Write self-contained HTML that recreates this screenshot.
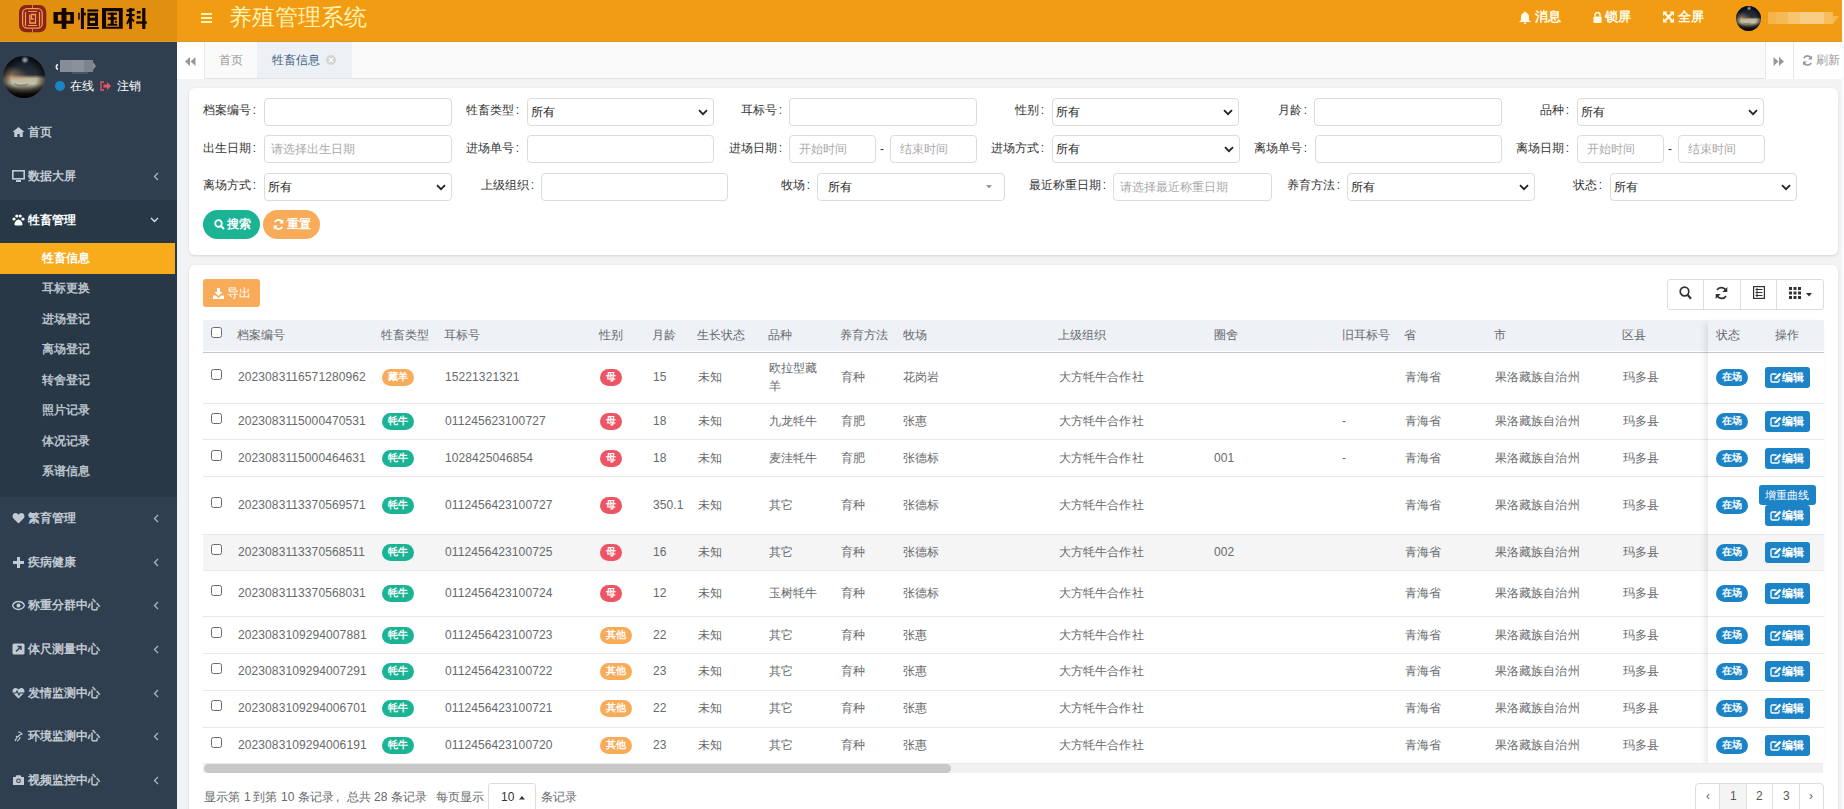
<!DOCTYPE html><html><head><meta charset="utf-8"><title>养殖管理系统</title><style>
*{box-sizing:border-box;margin:0;padding:0}
html,body{width:1844px;height:809px;overflow:hidden}
body{position:relative;background:#f3f3f4;font-family:"Liberation Sans",sans-serif;font-size:12px;color:#676a6c}
.abs{position:absolute}
.t{position:absolute;white-space:nowrap;line-height:1}
#hdrL{left:0;top:0;width:177px;height:42px;background:#e18f0e}
#hdrR{left:177px;top:0;width:1665px;height:42px;background:#f29c14}
#edge{left:1842px;top:0;width:2px;height:809px;background:#fafbfe}
#side{left:0;top:42px;width:177px;height:767px;background:#2f3f4f}
.mi{position:absolute;left:0;width:177px;height:44px;color:#c2cad3;font-weight:bold}
.mi .ic{position:absolute;left:12px;top:16px;width:13px;height:12px}
.mi .lb{position:absolute;left:28px;top:15px;line-height:14px;font-size:12px;white-space:nowrap}
.mi .ch{position:absolute;left:152px;top:17px;width:7px;height:10px}
.sub{position:absolute;left:42px;font-weight:bold;color:#bcc5cf;white-space:nowrap;line-height:14px}
#tabs{left:177px;top:42px;width:1665px;height:37px;background:#fafafa;border-bottom:1px solid #e4e4e4}
.panel{position:absolute;background:#fff;border-radius:6px;box-shadow:0 1px 3px rgba(0,0,0,.12)}
.lbl{position:absolute;color:#333;white-space:nowrap;line-height:12px;text-align:right}
.inp{position:absolute;height:28px;border:1px solid #dcdcdc;border-radius:4px;background:#fff}
.ph{position:absolute;left:7px;top:7px;color:#aaa;line-height:13px;white-space:nowrap}
.sel .v{position:absolute;left:3px;top:8px;color:#222;line-height:13px}
.sel svg{position:absolute;right:9px;top:10px}
.th{position:absolute;top:329px;line-height:12px;color:#676a6c;white-space:nowrap}
.td{position:absolute;line-height:12px;color:#676a6c;white-space:nowrap;letter-spacing:.1px}
.rl{position:absolute;left:203px;width:1620px;height:1px;background:#e7eaec}
.bdg{position:absolute;height:17px;border-radius:9px;color:#fff;font-weight:900;font-size:10px;line-height:16px;text-align:center;white-space:nowrap}
.cb{position:absolute;left:211px;width:11px;height:11px;border:1px solid #6a6a6a;border-radius:2.5px;background:#fff}
.g{background:#1ab394}.o{background:#f8ac59}.r{background:#ed5565}.b{background:#1c84c6}
.edit{position:absolute;left:1765px;width:45px;height:21px;background:#1c84c6;border-radius:3px;color:#fff;font-weight:bold;line-height:21px;font-size:12px}
</style></head><body>
<div id="hdrL" class="abs"></div><div id="hdrR" class="abs"></div>
<svg class="abs" style="left:0;top:0" width="177" height="42" viewBox="0 0 177 42">
<rect x="19" y="5" width="27.3" height="27.2" rx="7" fill="#8b2417"/>
<rect x="32" y="5" width="0.8" height="3.2" fill="#e8a050"/><rect x="32" y="29" width="0.8" height="3.2" fill="#e8a050"/>
<rect x="22.6" y="8.6" width="19.6" height="19.6" rx="4.5" fill="none" stroke="#f09a55" stroke-width="1.3"/>
<path d="M25.5 12v14.5M39.5 12v14.5M28 11.5h9M28 25.5h9" fill="none" stroke="#f09a55" stroke-width="1.2"/>
<path d="M29.8 14.5v8.5h5.7v-8.5h-4v4.5h2.2" fill="none" stroke="#f0a055" stroke-width="1.3"/>
<g fill="#120400">
<!-- 中 -->
<rect x="61.7" y="8" width="4.6" height="21"/>
<path d="M53.5 11.9h20.4v11.9H53.5zM57.9 14.8v6h3.8v-6zM66.3 14.8v6h4v-6z" fill-rule="evenodd"/>
<!-- 恒 -->
<rect x="80.9" y="8" width="3" height="21"/>
<rect x="78.2" y="12.7" width="1.5" height="7"/>
<rect x="83.9" y="12.7" width="1.9" height="2.7"/>
<rect x="87.4" y="9.4" width="10.9" height="2.2"/>
<path d="M87.4 12.7H98V26H87.4zM89.9 15.7v2.1H95v-2.1zM89.9 20.8V23H95v-2.2z" fill-rule="evenodd"/>
<rect x="87.1" y="27" width="11.7" height="2"/>
<!-- 国 -->
<path d="M102 8h20.7v20.7H102zM106.1 11.3v15.5h12.8V11.3z" fill-rule="evenodd"/>
<rect x="107.5" y="12.7" width="9.5" height="2.1"/>
<rect x="107.8" y="17.3" width="9" height="2.4"/>
<rect x="107.5" y="23.8" width="9.8" height="1.9"/>
<rect x="110.7" y="12.7" width="3" height="12"/>
<rect x="114.8" y="20.8" width="2" height="2"/>
<!-- 科 -->
<path d="M126.5 9.6l7.8-1.4.4 2.6-7.8 1.3z"/>
<rect x="126.2" y="14" width="8.4" height="2.2"/>
<rect x="129.2" y="8" width="2.7" height="21"/>
<path d="M129.3 16.5l-3.1 7 1.6 1 2.8-5.2z"/>
<path d="M131.8 17.5l2.8 3.3-1.1 1.5-2.1-2.3z"/>
<rect x="136.8" y="11" width="3.8" height="2.5"/>
<rect x="136.8" y="15.9" width="3.8" height="2.7"/>
<rect x="142.2" y="8" width="3.2" height="21"/>
<rect x="136.2" y="21.4" width="10.6" height="2.3"/>
</g>
</svg>
<svg class="abs" style="left:201px;top:13px" width="11" height="10" viewBox="0 0 11 10"><rect y="0" width="11" height="2" fill="#fff3b5"/><rect y="4" width="11" height="2" fill="#fff3b5"/><rect y="8" width="11" height="2" fill="#fff3b5"/></svg>
<div class="t" style="left:229px;top:6px;font-size:22.7px;color:#fff3b5">养殖管理系统</div>
<svg class="abs" style="left:1519px;top:11px" width="12" height="13" viewBox="0 0 12 13"><path d="M6 0.5c.6 0 1 .4 1 .9C9 2 10 3.6 10 6v3l1.6 1.5V11H.4v-.5L2 9V6c0-2.4 1-4 3-4.6 0-.5.4-.9 1-.9zM4.5 11.5h3c0 .8-.7 1.5-1.5 1.5s-1.5-.7-1.5-1.5z" fill="#fffbe8"/></svg>
<div class="t" style="left:1535px;top:10px;font-size:13px;font-weight:bold;color:#fffbe8">消息</div>
<svg class="abs" style="left:1593px;top:11px" width="9" height="12" viewBox="0 0 9 12"><path d="M2 5.5V4a2.5 2.5 0 0 1 5 0v1.5" fill="none" stroke="#fffbe8" stroke-width="1.5"/><rect x="0.5" y="5.5" width="8" height="6.5" rx="1" fill="#fffbe8"/></svg>
<div class="t" style="left:1605px;top:10px;font-size:13px;font-weight:bold;color:#fffbe8">锁屏</div>
<svg class="abs" style="left:1663px;top:11px" width="11" height="12" viewBox="0 0 11 12"><path d="M2.2 2.5l6.6 7M8.8 2.5l-6.6 7" stroke="#fffbe8" stroke-width="2.2"/><path d="M0 .5h4.5L0 5zM11 .5H6.5L11 5zM0 11.5h4.5L0 7zM11 11.5H6.5L11 7z" fill="#fffbe8"/></svg>
<div class="t" style="left:1678px;top:10px;font-size:13px;font-weight:bold;color:#fffbe8">全屏</div>
<svg class="abs" style="left:1736px;top:6px" width="25" height="25" viewBox="0 0 42 42">
<defs>
<clipPath id="cp1736"><circle cx="21" cy="21" r="21"/></clipPath>
<linearGradient id="sky1736" x1="0" y1="0" x2="0" y2="1"><stop offset="0" stop-color="#101a28"/><stop offset=".45" stop-color="#2a3038"/><stop offset=".5" stop-color="#8a8068"/><stop offset=".54" stop-color="#bdb9a0"/><stop offset=".66" stop-color="#c5c1a8"/><stop offset=".8" stop-color="#4a473c"/><stop offset=".92" stop-color="#0c0c0c"/></linearGradient>
<radialGradient id="warm1736" cx=".12" cy=".9" r=".5"><stop offset="0" stop-color="#c8a07a" stop-opacity=".75"/><stop offset="1" stop-color="#c8a07a" stop-opacity="0"/></radialGradient>
<radialGradient id="glow1736" cx=".5" cy=".5" r=".5"><stop offset="0" stop-color="#ffffff"/><stop offset=".35" stop-color="#cfe0f0" stop-opacity=".9"/><stop offset="1" stop-color="#5a7a9a" stop-opacity="0"/></radialGradient>
<radialGradient id="vig1736" cx=".5" cy=".5" r=".5"><stop offset=".6" stop-color="#000" stop-opacity="0"/><stop offset="1" stop-color="#000" stop-opacity=".65"/></radialGradient>
</defs>
<g clip-path="url(#cp1736)">
<rect width="42" height="42" fill="url(#sky1736)"/>
<rect width="42" height="24" fill="url(#warm1736)"/>
<path d="M11 27.5c4 2.5 9 2.5 14 .5" fill="none" stroke="#5a584a" stroke-width="1.2" opacity=".5"/>
<circle cx="22" cy="3.5" r="4.5" fill="url(#glow1736)"/>
<rect width="42" height="42" fill="url(#vig1736)"/>
</g></svg>
<div class="abs" style="left:1768px;top:12px;width:8px;height:12px;background:#f4b44a"></div>
<div class="abs" style="left:1776px;top:12px;width:12px;height:12px;background:#f5ba58"></div>
<div class="abs" style="left:1788px;top:12px;width:12px;height:12px;background:#f8c46e"></div>
<div class="abs" style="left:1800px;top:12px;width:24px;height:12px;background:#f9ce84"></div>
<div class="abs" style="left:1824px;top:12px;width:9px;height:12px;background:#f6bd5a"></div>
<svg class="abs" style="left:1833px;top:16px" width="6" height="8" viewBox="0 0 6 8"><path d="M0 0h6L0 8z" fill="#f5b850"/></svg>
<div class="abs" style="left:0;top:41px;width:1842px;height:1px;background:#d8982f"></div>
<div id="edge" class="abs"></div>
<div id="side" class="abs"></div>
<svg class="abs" style="left:3px;top:56px" width="42" height="42" viewBox="0 0 42 42">
<defs>
<clipPath id="cp3"><circle cx="21" cy="21" r="21"/></clipPath>
<linearGradient id="sky3" x1="0" y1="0" x2="0" y2="1"><stop offset="0" stop-color="#101a28"/><stop offset=".45" stop-color="#2a3038"/><stop offset=".5" stop-color="#8a8068"/><stop offset=".54" stop-color="#bdb9a0"/><stop offset=".66" stop-color="#c5c1a8"/><stop offset=".8" stop-color="#4a473c"/><stop offset=".92" stop-color="#0c0c0c"/></linearGradient>
<radialGradient id="warm3" cx=".12" cy=".9" r=".5"><stop offset="0" stop-color="#c8a07a" stop-opacity=".75"/><stop offset="1" stop-color="#c8a07a" stop-opacity="0"/></radialGradient>
<radialGradient id="glow3" cx=".5" cy=".5" r=".5"><stop offset="0" stop-color="#ffffff"/><stop offset=".35" stop-color="#cfe0f0" stop-opacity=".9"/><stop offset="1" stop-color="#5a7a9a" stop-opacity="0"/></radialGradient>
<radialGradient id="vig3" cx=".5" cy=".5" r=".5"><stop offset=".6" stop-color="#000" stop-opacity="0"/><stop offset="1" stop-color="#000" stop-opacity=".65"/></radialGradient>
</defs>
<g clip-path="url(#cp3)">
<rect width="42" height="42" fill="url(#sky3)"/>
<rect width="42" height="24" fill="url(#warm3)"/>
<path d="M11 27.5c4 2.5 9 2.5 14 .5" fill="none" stroke="#5a584a" stroke-width="1.2" opacity=".5"/>
<circle cx="22" cy="3.5" r="4.5" fill="url(#glow3)"/>
<rect width="42" height="42" fill="url(#vig3)"/>
</g></svg>
<div class="abs" style="left:60px;top:60px;width:12px;height:12px;background:#868d97"></div>
<div class="abs" style="left:72px;top:60px;width:12px;height:12px;background:#8a919b"></div>
<div class="abs" style="left:84px;top:60px;width:9px;height:12px;background:#7d848e"></div>
<div class="abs" style="left:72px;top:72px;width:16px;height:2px;background:#4a5562"></div>
<svg class="abs" style="left:54px;top:64px" width="5" height="6" viewBox="0 0 5 6"><path d="M4 .5C2 1 1.5 4.5 4 5.5" fill="none" stroke="#eee" stroke-width="1.6"/></svg>
<svg class="abs" style="left:93px;top:62px" width="4" height="8" viewBox="0 0 4 8"><path d="M0 0l3 4-3 4z" fill="#8a8f88"/></svg>
<div class="abs" style="left:55px;top:81px;width:10px;height:10px;border-radius:5px;background:#1c84c6"></div>
<div class="t" style="left:70px;top:80px;font-size:12px;color:#fff">在线</div>
<svg class="abs" style="left:100px;top:81px" width="11" height="10" viewBox="0 0 11 10"><path d="M4 1H1v8h3" fill="none" stroke="#ed5565" stroke-width="1.3"/><path d="M3.5 3.5h3.5V1l4 4-4 4V6.5H3.5z" fill="#ed5565"/></svg>
<div class="t" style="left:117px;top:80px;font-size:12px;color:#fff">注销</div>
<svg class="abs" style="left:12px;top:126px" width="13" height="12" viewBox="0 0 13 12"><path d="M6.5 1L0.5 6h1.8v5h3V8h2.4v3h3V6h1.8z" fill="#c2cad3"/></svg><div class="t" style="left:28px;top:126px;font-size:12px;font-weight:bold;color:#c2cad3">首页</div>
<svg class="abs" style="left:12px;top:170px" width="13" height="12" viewBox="0 0 13 12"><rect x="0.8" y="0.8" width="11.4" height="8" fill="none" stroke="#c2cad3" stroke-width="1.6"/><rect x="4" y="10" width="5" height="2" fill="#c2cad3"/></svg><div class="t" style="left:28px;top:170px;font-size:12px;font-weight:bold;color:#c2cad3">数据大屏</div><svg class="abs" style="left:153px;top:172px" width="6" height="9" viewBox="0 0 6 9"><path d="M5 1L1.5 4.5 5 8" fill="none" stroke="#aab4be" stroke-width="1.3"/></svg>
<div class="abs" style="left:0;top:200px;width:177px;height:43px;background:#293846"></div>
<div class="abs" style="left:0;top:243px;width:177px;height:254px;background:#293846"></div>
<svg class="abs" style="left:12px;top:214px" width="13" height="12" viewBox="0 0 13 12"><circle cx="2" cy="5" r="1.6" fill="#fff"/><circle cx="4.8" cy="2" r="1.6" fill="#fff"/><circle cx="8.2" cy="2" r="1.6" fill="#fff"/><circle cx="11" cy="5" r="1.6" fill="#fff"/><path d="M6.5 5.5c2 0 4 3 4 4.8 0 1.4-1.5 1.2-4 1.2s-4 .2-4-1.2c0-1.8 2-4.8 4-4.8z" fill="#fff"/></svg><div class="t" style="left:28px;top:214px;font-size:12px;font-weight:bold;color:#fff">牲畜管理</div>
<svg class="abs" style="left:150px;top:217px" width="9" height="6" viewBox="0 0 9 6"><path d="M1 1l3.5 3.5L8 1" fill="none" stroke="#dfe4ea" stroke-width="1.3"/></svg>
<div class="abs" style="left:0;top:243px;width:175px;height:31px;background:#f8ac1c"></div>
<div class="t" style="left:42px;top:252px;font-size:12px;font-weight:bold;color:#fff">牲畜信息</div>
<div class="t" style="left:42px;top:282px;font-size:12px;font-weight:bold;color:#b9c3cd">耳标更换</div>
<div class="t" style="left:42px;top:313px;font-size:12px;font-weight:bold;color:#b9c3cd">进场登记</div>
<div class="t" style="left:42px;top:343px;font-size:12px;font-weight:bold;color:#b9c3cd">离场登记</div>
<div class="t" style="left:42px;top:374px;font-size:12px;font-weight:bold;color:#b9c3cd">转舍登记</div>
<div class="t" style="left:42px;top:404px;font-size:12px;font-weight:bold;color:#b9c3cd">照片记录</div>
<div class="t" style="left:42px;top:435px;font-size:12px;font-weight:bold;color:#b9c3cd">体况记录</div>
<div class="t" style="left:42px;top:465px;font-size:12px;font-weight:bold;color:#b9c3cd">系谱信息</div>
<svg class="abs" style="left:12px;top:512px" width="13" height="12" viewBox="0 0 13 12"><path d="M6.5 11.5L1.5 6.5C-.5 4.5.8 1 3.5 1c1.4 0 2.3.8 3 1.7C7.2 1.8 8.1 1 9.5 1c2.7 0 4 3.5 2 5.5z" fill="#c2cad3"/></svg><div class="t" style="left:28px;top:512px;font-size:12px;font-weight:bold;color:#c2cad3">繁育管理</div><svg class="abs" style="left:153px;top:514px" width="6" height="9" viewBox="0 0 6 9"><path d="M5 1L1.5 4.5 5 8" fill="none" stroke="#aab4be" stroke-width="1.3"/></svg>
<svg class="abs" style="left:12px;top:556px" width="13" height="12" viewBox="0 0 13 12"><path d="M5 1h3v4h4v3H8v4H5V8H1V5h4z" fill="#c2cad3"/></svg><div class="t" style="left:28px;top:556px;font-size:12px;font-weight:bold;color:#c2cad3">疾病健康</div><svg class="abs" style="left:153px;top:558px" width="6" height="9" viewBox="0 0 6 9"><path d="M5 1L1.5 4.5 5 8" fill="none" stroke="#aab4be" stroke-width="1.3"/></svg>
<svg class="abs" style="left:12px;top:599px" width="13" height="12" viewBox="0 0 13 12"><path d="M6.5 2.5C3.5 2.5 1.3 4.5.5 6.5c.8 2 3 4 6 4s5.2-2 6-4c-.8-2-3-4-6-4z" fill="none" stroke="#c2cad3" stroke-width="1.4"/><circle cx="6.5" cy="6.5" r="2" fill="#c2cad3"/></svg><div class="t" style="left:28px;top:599px;font-size:12px;font-weight:bold;color:#c2cad3">称重分群中心</div><svg class="abs" style="left:153px;top:601px" width="6" height="9" viewBox="0 0 6 9"><path d="M5 1L1.5 4.5 5 8" fill="none" stroke="#aab4be" stroke-width="1.3"/></svg>
<svg class="abs" style="left:12px;top:643px" width="13" height="12" viewBox="0 0 13 12"><rect x=".5" y=".5" width="12" height="11" rx="1.5" fill="#c2cad3"/><path d="M4 8.5l5-5M5.5 3.5H9V7" fill="none" stroke="#2f3f4f" stroke-width="1.4"/></svg><div class="t" style="left:28px;top:643px;font-size:12px;font-weight:bold;color:#c2cad3">体尺测量中心</div><svg class="abs" style="left:153px;top:645px" width="6" height="9" viewBox="0 0 6 9"><path d="M5 1L1.5 4.5 5 8" fill="none" stroke="#aab4be" stroke-width="1.3"/></svg>
<svg class="abs" style="left:12px;top:687px" width="13" height="12" viewBox="0 0 13 12"><path d="M6.5 11.5L1.5 6.5C-.5 4.5.8 1 3.5 1c1.4 0 2.3.8 3 1.7C7.2 1.8 8.1 1 9.5 1c2.7 0 4 3.5 2 5.5z" fill="#c2cad3"/><path d="M1 6h3l1-2 2 4 1-2h4" fill="none" stroke="#2f3f4f" stroke-width="1.1"/></svg><div class="t" style="left:28px;top:687px;font-size:12px;font-weight:bold;color:#c2cad3">发情监测中心</div><svg class="abs" style="left:153px;top:689px" width="6" height="9" viewBox="0 0 6 9"><path d="M5 1L1.5 4.5 5 8" fill="none" stroke="#aab4be" stroke-width="1.3"/></svg>
<svg class="abs" style="left:12px;top:730px" width="13" height="12" viewBox="0 0 13 12"><path d="M3 11c1-3 3-5 6-7M6 2c2 0 4 1 4 3M4 6c1 1 2 1 3 0M8 7c0 2-1 3-3 4" fill="none" stroke="#c2cad3" stroke-width="1.1"/></svg><div class="t" style="left:28px;top:730px;font-size:12px;font-weight:bold;color:#c2cad3">环境监测中心</div><svg class="abs" style="left:153px;top:732px" width="6" height="9" viewBox="0 0 6 9"><path d="M5 1L1.5 4.5 5 8" fill="none" stroke="#aab4be" stroke-width="1.3"/></svg>
<svg class="abs" style="left:12px;top:774px" width="13" height="12" viewBox="0 0 13 12"><path d="M1 3h2.5l1-1.8h4l1 1.8H12v8H1z" fill="#c2cad3"/><circle cx="6.5" cy="6.8" r="2.3" fill="#2f3f4f"/><circle cx="6.5" cy="6.8" r="1.3" fill="#c2cad3"/></svg><div class="t" style="left:28px;top:774px;font-size:12px;font-weight:bold;color:#c2cad3">视频监控中心</div><svg class="abs" style="left:153px;top:776px" width="6" height="9" viewBox="0 0 6 9"><path d="M5 1L1.5 4.5 5 8" fill="none" stroke="#aab4be" stroke-width="1.3"/></svg>
<div id="tabs" class="abs"></div>
<div class="abs" style="left:177px;top:42px;width:28px;height:37px;background:#fff;border-right:1px solid #e7e7e7"></div>
<svg class="abs" style="left:185px;top:57px" width="11" height="9" viewBox="0 0 11 9"><path d="M5 0v9L0 4.5zM10.5 0v9L5.5 4.5z" fill="#999"/></svg>
<div class="t" style="left:219px;top:54px;font-size:12px;color:#999">首页</div>
<div class="abs" style="left:257px;top:42px;width:95px;height:36px;background:#edf1f5"></div>
<div class="t" style="left:272px;top:54px;font-size:12px;color:#3d5f84">牲畜信息</div>
<div class="abs" style="left:326px;top:55px;width:10px;height:10px;border-radius:5px;background:#d5d5d5"></div>
<svg class="abs" style="left:326px;top:55px" width="10" height="10" viewBox="0 0 10 10"><path d="M3 3l4 4M7 3L3 7" stroke="#fff" stroke-width="1.2"/></svg>
<div class="abs" style="left:1765px;top:42px;width:77px;height:37px;background:#fff;border-left:1px solid #e7e7e7"></div>
<div class="abs" style="left:1793px;top:42px;width:1px;height:37px;background:#e7e7e7"></div>
<svg class="abs" style="left:1773px;top:57px" width="11" height="9" viewBox="0 0 11 9"><path d="M0.5 0v9l5-4.5zM6 0v9l5-4.5z" fill="#999"/></svg>
<svg class="abs" style="left:1802px;top:55px" width="11" height="11" viewBox="0 0 11 11"><path d="M9.3 4A4 4 0 0 0 1.8 3.2M1.7 7a4 4 0 0 0 7.5.8" fill="none" stroke="#999" stroke-width="1.6"/><path d="M10 0.5v4H6zM1 10.5v-4h4z" fill="#999"/></svg>
<div class="t" style="left:1816px;top:54px;font-size:12px;color:#999">刷新</div>
<div class="panel" style="left:189px;top:88px;width:1649px;height:167px"></div>
<div class="t" style="left:56px;top:104px;width:200px;text-align:right;color:#333">档案编号<span style="margin-left:2px">:</span></div><div class="inp" style="left:264px;top:98px;width:188px"></div>
<div class="t" style="left:319px;top:104px;width:200px;text-align:right;color:#333">牲畜类型<span style="margin-left:2px">:</span></div><div class="inp" style="left:527px;top:98px;width:187px"></div><div class="t" style="left:531px;top:106px;color:#222">所有</div><svg class="abs" style="left:698px;top:109px" width="10" height="7" viewBox="0 0 10 7"><path d="M1 1.2l4 4 4-4" fill="none" stroke="#222" stroke-width="1.8"/></svg>
<div class="t" style="left:582px;top:104px;width:200px;text-align:right;color:#333">耳标号<span style="margin-left:2px">:</span></div><div class="inp" style="left:789px;top:98px;width:188px"></div>
<div class="t" style="left:844px;top:104px;width:200px;text-align:right;color:#333">性别<span style="margin-left:2px">:</span></div><div class="inp" style="left:1052px;top:98px;width:187px"></div><div class="t" style="left:1056px;top:106px;color:#222">所有</div><svg class="abs" style="left:1223px;top:109px" width="10" height="7" viewBox="0 0 10 7"><path d="M1 1.2l4 4 4-4" fill="none" stroke="#222" stroke-width="1.8"/></svg>
<div class="t" style="left:1107px;top:104px;width:200px;text-align:right;color:#333">月龄<span style="margin-left:2px">:</span></div><div class="inp" style="left:1314px;top:98px;width:188px"></div>
<div class="t" style="left:1369px;top:104px;width:200px;text-align:right;color:#333">品种<span style="margin-left:2px">:</span></div><div class="inp" style="left:1577px;top:98px;width:187px"></div><div class="t" style="left:1581px;top:106px;color:#222">所有</div><svg class="abs" style="left:1748px;top:109px" width="10" height="7" viewBox="0 0 10 7"><path d="M1 1.2l4 4 4-4" fill="none" stroke="#222" stroke-width="1.8"/></svg>
<div class="t" style="left:56px;top:142px;width:200px;text-align:right;color:#333">出生日期<span style="margin-left:2px">:</span></div><div class="inp" style="left:264px;top:135px;width:188px"></div><div class="t" style="left:271px;top:143px;color:#aaa">请选择出生日期</div>
<div class="t" style="left:319px;top:142px;width:200px;text-align:right;color:#333">进场单号<span style="margin-left:2px">:</span></div><div class="inp" style="left:527px;top:135px;width:187px"></div>
<div class="t" style="left:582px;top:142px;width:200px;text-align:right;color:#333">进场日期<span style="margin-left:2px">:</span></div><div class="inp" style="left:789px;top:135px;width:87px"></div><div class="t" style="left:799px;top:143px;color:#aaa">开始时间</div><div class="t" style="left:880px;top:143px;color:#333">-</div><div class="inp" style="left:890px;top:135px;width:87px"></div><div class="t" style="left:900px;top:143px;color:#aaa">结束时间</div>
<div class="t" style="left:844px;top:142px;width:200px;text-align:right;color:#333">进场方式<span style="margin-left:2px">:</span></div><div class="inp" style="left:1052px;top:135px;width:188px"></div><div class="t" style="left:1056px;top:143px;color:#222">所有</div><svg class="abs" style="left:1224px;top:146px" width="10" height="7" viewBox="0 0 10 7"><path d="M1 1.2l4 4 4-4" fill="none" stroke="#222" stroke-width="1.8"/></svg>
<div class="t" style="left:1107px;top:142px;width:200px;text-align:right;color:#333">离场单号<span style="margin-left:2px">:</span></div><div class="inp" style="left:1315px;top:135px;width:187px"></div>
<div class="t" style="left:1369px;top:142px;width:200px;text-align:right;color:#333">离场日期<span style="margin-left:2px">:</span></div><div class="inp" style="left:1577px;top:135px;width:87px"></div><div class="t" style="left:1587px;top:143px;color:#aaa">开始时间</div><div class="t" style="left:1668px;top:143px;color:#333">-</div><div class="inp" style="left:1678px;top:135px;width:87px"></div><div class="t" style="left:1688px;top:143px;color:#aaa">结束时间</div>
<div class="t" style="left:56px;top:179px;width:200px;text-align:right;color:#333">离场方式<span style="margin-left:2px">:</span></div><div class="inp" style="left:264px;top:173px;width:188px"></div><div class="t" style="left:268px;top:181px;color:#222">所有</div><svg class="abs" style="left:436px;top:184px" width="10" height="7" viewBox="0 0 10 7"><path d="M1 1.2l4 4 4-4" fill="none" stroke="#222" stroke-width="1.8"/></svg>
<div class="t" style="left:334px;top:179px;width:200px;text-align:right;color:#333">上级组织<span style="margin-left:2px">:</span></div><div class="inp" style="left:541px;top:173px;width:187px"></div>
<div class="t" style="left:610px;top:179px;width:200px;text-align:right;color:#333">牧场<span style="margin-left:2px">:</span></div><div class="inp" style="left:817px;top:173px;width:188px"></div><div class="t" style="left:828px;top:181px;color:#222">所有</div><svg class="abs" style="left:986px;top:185px" width="6" height="4" viewBox="0 0 6 4"><path d="M0 0h6L3 3.5z" fill="#999"/></svg>
<div class="t" style="left:906px;top:179px;width:200px;text-align:right;color:#333">最近称重日期<span style="margin-left:2px">:</span></div><div class="inp" style="left:1113px;top:173px;width:159px"></div><div class="t" style="left:1120px;top:181px;color:#aaa">请选择最近称重日期</div>
<div class="t" style="left:1140px;top:179px;width:200px;text-align:right;color:#333">养育方法<span style="margin-left:2px">:</span></div><div class="inp" style="left:1347px;top:173px;width:188px"></div><div class="t" style="left:1351px;top:181px;color:#222">所有</div><svg class="abs" style="left:1519px;top:184px" width="10" height="7" viewBox="0 0 10 7"><path d="M1 1.2l4 4 4-4" fill="none" stroke="#222" stroke-width="1.8"/></svg>
<div class="t" style="left:1402px;top:179px;width:200px;text-align:right;color:#333">状态<span style="margin-left:2px">:</span></div><div class="inp" style="left:1610px;top:173px;width:187px"></div><div class="t" style="left:1614px;top:181px;color:#222">所有</div><svg class="abs" style="left:1781px;top:184px" width="10" height="7" viewBox="0 0 10 7"><path d="M1 1.2l4 4 4-4" fill="none" stroke="#222" stroke-width="1.8"/></svg>
<div class="abs" style="left:203px;top:210px;width:57px;height:29px;border-radius:15px;background:#1ab394"></div>
<svg class="abs" style="left:214px;top:219px" width="11" height="11" viewBox="0 0 11 11"><circle cx="4.5" cy="4.5" r="3.3" fill="none" stroke="#fff" stroke-width="1.8"/><path d="M7 7l3 3" stroke="#fff" stroke-width="2"/></svg>
<div class="t" style="left:227px;top:218.5px;font-size:11.5px;font-weight:bold;color:#fff">搜索</div>
<div class="abs" style="left:263px;top:210px;width:57px;height:29px;border-radius:15px;background:#f8ac59"></div>
<svg class="abs" style="left:273px;top:219px" width="11" height="11" viewBox="0 0 11 11"><path d="M9.3 4A4 4 0 0 0 1.8 3.2M1.7 7a4 4 0 0 0 7.5.8" fill="none" stroke="#fff" stroke-width="1.8"/><path d="M10.3 0.5v4h-4zM.7 10.5v-4h4z" fill="#fff"/></svg>
<div class="t" style="left:287px;top:218.5px;font-size:11.5px;font-weight:bold;color:#fff">重置</div>
<div class="panel" style="left:189px;top:265px;width:1649px;height:560px"></div>
<div class="abs" style="left:203px;top:279px;width:57px;height:28px;border-radius:3px;background:#f8ac59"></div>
<svg class="abs" style="left:213px;top:288px" width="11" height="11" viewBox="0 0 11 11"><path d="M4 0h3v4h2.5L5.5 8 1.5 4H4z" fill="#fff"/><path d="M0 7.5h2.5l3 2.5 3-2.5H11V11H0z" fill="#fff"/></svg>
<div class="t" style="left:227px;top:287px;font-size:12px;color:#fff">导出</div>
<div class="abs" style="left:1667px;top:279px;width:157px;height:31px;border:1px solid #ddd;border-radius:3px;background:#fff"></div>
<div class="abs" style="left:1703px;top:279px;width:1px;height:31px;background:#ddd"></div>
<div class="abs" style="left:1740px;top:279px;width:1px;height:31px;background:#ddd"></div>
<div class="abs" style="left:1776px;top:279px;width:1px;height:31px;background:#ddd"></div>
<svg class="abs" style="left:1679px;top:286px" width="13" height="14" viewBox="0 0 13 14"><circle cx="5.5" cy="5.5" r="4.3" fill="none" stroke="#333" stroke-width="1.7"/><path d="M8.5 8.8l3.5 4" stroke="#333" stroke-width="2.2"/></svg>
<svg class="abs" style="left:1715px;top:286px" width="13" height="14" viewBox="0 0 13 14"><path d="M11 5A5 5 0 0 0 2 4M2 9a5 5 0 0 0 9 1" fill="none" stroke="#333" stroke-width="1.7"/><path d="M12.3 1v5h-5zM.7 13V8h5z" fill="#333"/></svg>
<svg class="abs" style="left:1753px;top:286px" width="12" height="13" viewBox="0 0 12 13"><rect x=".6" y=".6" width="10.8" height="11.8" fill="none" stroke="#333" stroke-width="1.2"/><path d="M2.5 3.5h7M2.5 6.5h7M2.5 9.5h7M4 2v9" stroke="#333" stroke-width="1"/></svg>
<svg class="abs" style="left:1789px;top:287px" width="12" height="12" viewBox="0 0 12 12"><path d="M0 0h3v3H0zM4.5 0h3v3h-3zM9 0h3v3H9zM0 4.5h3v3H0zM4.5 4.5h3v3h-3zM9 4.5h3v3H9zM0 9h3v3H0zM4.5 9h3v3h-3zM9 9h3v3H9z" fill="#333"/></svg>
<svg class="abs" style="left:1806px;top:293px" width="6" height="4" viewBox="0 0 6 4"><path d="M0 0h6L3 3.5z" fill="#333"/></svg>
<div class="abs" style="left:203px;top:320px;width:1620px;height:31px;background:#eef1f6"></div>
<div class="abs" style="left:203px;top:352px;width:1620px;height:1px;background:#c5c8cc"></div>
<div class="cb" style="top:327px"></div>
<div class="th" style="left:237px">档案编号</div>
<div class="th" style="left:381px">牲畜类型</div>
<div class="th" style="left:444px">耳标号</div>
<div class="th" style="left:599px">性别</div>
<div class="th" style="left:652px">月龄</div>
<div class="th" style="left:697px">生长状态</div>
<div class="th" style="left:768px">品种</div>
<div class="th" style="left:840px">养育方法</div>
<div class="th" style="left:903px">牧场</div>
<div class="th" style="left:1058px">上级组织</div>
<div class="th" style="left:1214px">圈舍</div>
<div class="th" style="left:1342px">旧耳标号</div>
<div class="th" style="left:1404px">省</div>
<div class="th" style="left:1494px">市</div>
<div class="th" style="left:1622px">区县</div>
<div class="abs" style="left:203px;top:535px;width:1620px;height:35px;background:#f5f5f5"></div>
<div class="cb" style="top:369px"></div>
<div class="td" style="left:238px;top:371px">2023083116571280962</div>
<div class="bdg o" style="left:382px;top:369px;width:32px">藏羊</div>
<div class="td" style="left:445px;top:371px">15221321321</div>
<div class="bdg r" style="left:600px;top:369px;width:22px">母</div>
<div class="td" style="left:653px;top:371px">15</div>
<div class="td" style="left:698px;top:371px">未知</div>
<div class="td" style="left:769px;top:362px">欧拉型藏</div><div class="td" style="left:769px;top:380px">羊</div>
<div class="td" style="left:841px;top:371px">育种</div>
<div class="td" style="left:903px;top:371px">花岗岩</div>
<div class="td" style="left:1059px;top:371px">大方牦牛合作社</div>
<div class="td" style="left:1405px;top:371px">青海省</div>
<div class="td" style="left:1495px;top:371px">果洛藏族自治州</div>
<div class="td" style="left:1623px;top:371px">玛多县</div>
<div class="rl" style="top:403px"></div>
<div class="cb" style="top:413px"></div>
<div class="td" style="left:238px;top:415px">2023083115000470531</div>
<div class="bdg g" style="left:382px;top:413px;width:32px">牦牛</div>
<div class="td" style="left:445px;top:415px">011245623100727</div>
<div class="bdg r" style="left:600px;top:413px;width:22px">母</div>
<div class="td" style="left:653px;top:415px">18</div>
<div class="td" style="left:698px;top:415px">未知</div>
<div class="td" style="left:769px;top:415px">九龙牦牛</div>
<div class="td" style="left:841px;top:415px">育肥</div>
<div class="td" style="left:903px;top:415px">张惠</div>
<div class="td" style="left:1059px;top:415px">大方牦牛合作社</div>
<div class="td" style="left:1342px;top:415px">-</div>
<div class="td" style="left:1405px;top:415px">青海省</div>
<div class="td" style="left:1495px;top:415px">果洛藏族自治州</div>
<div class="td" style="left:1623px;top:415px">玛多县</div>
<div class="rl" style="top:439px"></div>
<div class="cb" style="top:450px"></div>
<div class="td" style="left:238px;top:452px">2023083115000464631</div>
<div class="bdg g" style="left:382px;top:450px;width:32px">牦牛</div>
<div class="td" style="left:445px;top:452px">1028425046854</div>
<div class="bdg r" style="left:600px;top:450px;width:22px">母</div>
<div class="td" style="left:653px;top:452px">18</div>
<div class="td" style="left:698px;top:452px">未知</div>
<div class="td" style="left:769px;top:452px">麦洼牦牛</div>
<div class="td" style="left:841px;top:452px">育肥</div>
<div class="td" style="left:903px;top:452px">张德标</div>
<div class="td" style="left:1059px;top:452px">大方牦牛合作社</div>
<div class="td" style="left:1214px;top:452px">001</div>
<div class="td" style="left:1342px;top:452px">-</div>
<div class="td" style="left:1405px;top:452px">青海省</div>
<div class="td" style="left:1495px;top:452px">果洛藏族自治州</div>
<div class="td" style="left:1623px;top:452px">玛多县</div>
<div class="rl" style="top:476px"></div>
<div class="cb" style="top:497px"></div>
<div class="td" style="left:238px;top:499px">2023083113370569571</div>
<div class="bdg g" style="left:382px;top:497px;width:32px">牦牛</div>
<div class="td" style="left:445px;top:499px">0112456423100727</div>
<div class="bdg r" style="left:600px;top:497px;width:22px">母</div>
<div class="td" style="left:653px;top:499px">350.1</div>
<div class="td" style="left:698px;top:499px">未知</div>
<div class="td" style="left:769px;top:499px">其它</div>
<div class="td" style="left:841px;top:499px">育种</div>
<div class="td" style="left:903px;top:499px">张德标</div>
<div class="td" style="left:1059px;top:499px">大方牦牛合作社</div>
<div class="td" style="left:1405px;top:499px">青海省</div>
<div class="td" style="left:1495px;top:499px">果洛藏族自治州</div>
<div class="td" style="left:1623px;top:499px">玛多县</div>
<div class="rl" style="top:534px"></div>
<div class="cb" style="top:544px"></div>
<div class="td" style="left:238px;top:546px">2023083113370568511</div>
<div class="bdg g" style="left:382px;top:544px;width:32px">牦牛</div>
<div class="td" style="left:445px;top:546px">0112456423100725</div>
<div class="bdg r" style="left:600px;top:544px;width:22px">母</div>
<div class="td" style="left:653px;top:546px">16</div>
<div class="td" style="left:698px;top:546px">未知</div>
<div class="td" style="left:769px;top:546px">其它</div>
<div class="td" style="left:841px;top:546px">育种</div>
<div class="td" style="left:903px;top:546px">张德标</div>
<div class="td" style="left:1059px;top:546px">大方牦牛合作社</div>
<div class="td" style="left:1214px;top:546px">002</div>
<div class="td" style="left:1405px;top:546px">青海省</div>
<div class="td" style="left:1495px;top:546px">果洛藏族自治州</div>
<div class="td" style="left:1623px;top:546px">玛多县</div>
<div class="rl" style="top:570px"></div>
<div class="cb" style="top:585px"></div>
<div class="td" style="left:238px;top:587px">2023083113370568031</div>
<div class="bdg g" style="left:382px;top:585px;width:32px">牦牛</div>
<div class="td" style="left:445px;top:587px">0112456423100724</div>
<div class="bdg r" style="left:600px;top:585px;width:22px">母</div>
<div class="td" style="left:653px;top:587px">12</div>
<div class="td" style="left:698px;top:587px">未知</div>
<div class="td" style="left:769px;top:587px">玉树牦牛</div>
<div class="td" style="left:841px;top:587px">育种</div>
<div class="td" style="left:903px;top:587px">张德标</div>
<div class="td" style="left:1059px;top:587px">大方牦牛合作社</div>
<div class="td" style="left:1405px;top:587px">青海省</div>
<div class="td" style="left:1495px;top:587px">果洛藏族自治州</div>
<div class="td" style="left:1623px;top:587px">玛多县</div>
<div class="rl" style="top:616px"></div>
<div class="cb" style="top:627px"></div>
<div class="td" style="left:238px;top:629px">2023083109294007881</div>
<div class="bdg g" style="left:382px;top:627px;width:32px">牦牛</div>
<div class="td" style="left:445px;top:629px">0112456423100723</div>
<div class="bdg o" style="left:600px;top:627px;width:32px">其他</div>
<div class="td" style="left:653px;top:629px">22</div>
<div class="td" style="left:698px;top:629px">未知</div>
<div class="td" style="left:769px;top:629px">其它</div>
<div class="td" style="left:841px;top:629px">育种</div>
<div class="td" style="left:903px;top:629px">张惠</div>
<div class="td" style="left:1059px;top:629px">大方牦牛合作社</div>
<div class="td" style="left:1405px;top:629px">青海省</div>
<div class="td" style="left:1495px;top:629px">果洛藏族自治州</div>
<div class="td" style="left:1623px;top:629px">玛多县</div>
<div class="rl" style="top:653px"></div>
<div class="cb" style="top:663px"></div>
<div class="td" style="left:238px;top:665px">2023083109294007291</div>
<div class="bdg g" style="left:382px;top:663px;width:32px">牦牛</div>
<div class="td" style="left:445px;top:665px">0112456423100722</div>
<div class="bdg o" style="left:600px;top:663px;width:32px">其他</div>
<div class="td" style="left:653px;top:665px">23</div>
<div class="td" style="left:698px;top:665px">未知</div>
<div class="td" style="left:769px;top:665px">其它</div>
<div class="td" style="left:841px;top:665px">育种</div>
<div class="td" style="left:903px;top:665px">张惠</div>
<div class="td" style="left:1059px;top:665px">大方牦牛合作社</div>
<div class="td" style="left:1405px;top:665px">青海省</div>
<div class="td" style="left:1495px;top:665px">果洛藏族自治州</div>
<div class="td" style="left:1623px;top:665px">玛多县</div>
<div class="rl" style="top:690px"></div>
<div class="cb" style="top:700px"></div>
<div class="td" style="left:238px;top:702px">2023083109294006701</div>
<div class="bdg g" style="left:382px;top:700px;width:32px">牦牛</div>
<div class="td" style="left:445px;top:702px">0112456423100721</div>
<div class="bdg o" style="left:600px;top:700px;width:32px">其他</div>
<div class="td" style="left:653px;top:702px">22</div>
<div class="td" style="left:698px;top:702px">未知</div>
<div class="td" style="left:769px;top:702px">其它</div>
<div class="td" style="left:841px;top:702px">育种</div>
<div class="td" style="left:903px;top:702px">张惠</div>
<div class="td" style="left:1059px;top:702px">大方牦牛合作社</div>
<div class="td" style="left:1405px;top:702px">青海省</div>
<div class="td" style="left:1495px;top:702px">果洛藏族自治州</div>
<div class="td" style="left:1623px;top:702px">玛多县</div>
<div class="rl" style="top:727px"></div>
<div class="cb" style="top:737px"></div>
<div class="td" style="left:238px;top:739px">2023083109294006191</div>
<div class="bdg g" style="left:382px;top:737px;width:32px">牦牛</div>
<div class="td" style="left:445px;top:739px">0112456423100720</div>
<div class="bdg o" style="left:600px;top:737px;width:32px">其他</div>
<div class="td" style="left:653px;top:739px">23</div>
<div class="td" style="left:698px;top:739px">未知</div>
<div class="td" style="left:769px;top:739px">其它</div>
<div class="td" style="left:841px;top:739px">育种</div>
<div class="td" style="left:903px;top:739px">张惠</div>
<div class="td" style="left:1059px;top:739px">大方牦牛合作社</div>
<div class="td" style="left:1405px;top:739px">青海省</div>
<div class="td" style="left:1495px;top:739px">果洛藏族自治州</div>
<div class="td" style="left:1623px;top:739px">玛多县</div>
<div class="abs" style="left:1708px;top:320px;width:116px;height:443px;background:#fff;box-shadow:-3px 3px 6px rgba(0,0,0,.09)"></div>
<div class="abs" style="left:1708px;top:320px;width:116px;height:31px;background:#eef1f6"></div>
<div class="abs" style="left:1708px;top:352px;width:116px;height:1px;background:#c5c8cc"></div>
<div class="th" style="left:1716px">状态</div><div class="th" style="left:1775px">操作</div>
<div class="abs" style="left:1708px;top:353px;width:116px;height:50px;background:#fff"></div>
<div class="bdg b" style="left:1716px;top:369px;width:32px">在场</div>
<div class="edit" style="top:367px"></div>
<svg class="abs" style="left:1770px;top:372px" width="12" height="11" viewBox="0 0 12 11"><path d="M6.5 2H2.3C1.6 2 1 2.6 1 3.3v5.4C1 9.4 1.6 10 2.3 10h5.4C8.4 10 9 9.4 9 8.7V6.8" fill="none" stroke="#fff" stroke-width="1.3"/><path d="M4.3 7.6l.4-2L9.6.8l1.7 1.7-4.9 4.8z" fill="#fff"/></svg>
<div class="t" style="left:1782px;top:372px;font-size:11px;font-weight:900;color:#fff">编辑</div>
<div class="abs" style="left:1708px;top:404px;width:116px;height:35px;background:#fff"></div>
<div class="abs" style="left:1708px;top:403px;width:116px;height:1px;background:#e7eaec"></div>
<div class="bdg b" style="left:1716px;top:413px;width:32px">在场</div>
<div class="edit" style="top:411px"></div>
<svg class="abs" style="left:1770px;top:416px" width="12" height="11" viewBox="0 0 12 11"><path d="M6.5 2H2.3C1.6 2 1 2.6 1 3.3v5.4C1 9.4 1.6 10 2.3 10h5.4C8.4 10 9 9.4 9 8.7V6.8" fill="none" stroke="#fff" stroke-width="1.3"/><path d="M4.3 7.6l.4-2L9.6.8l1.7 1.7-4.9 4.8z" fill="#fff"/></svg>
<div class="t" style="left:1782px;top:416px;font-size:11px;font-weight:900;color:#fff">编辑</div>
<div class="abs" style="left:1708px;top:440px;width:116px;height:36px;background:#fff"></div>
<div class="abs" style="left:1708px;top:439px;width:116px;height:1px;background:#e7eaec"></div>
<div class="bdg b" style="left:1716px;top:450px;width:32px">在场</div>
<div class="edit" style="top:448px"></div>
<svg class="abs" style="left:1770px;top:453px" width="12" height="11" viewBox="0 0 12 11"><path d="M6.5 2H2.3C1.6 2 1 2.6 1 3.3v5.4C1 9.4 1.6 10 2.3 10h5.4C8.4 10 9 9.4 9 8.7V6.8" fill="none" stroke="#fff" stroke-width="1.3"/><path d="M4.3 7.6l.4-2L9.6.8l1.7 1.7-4.9 4.8z" fill="#fff"/></svg>
<div class="t" style="left:1782px;top:453px;font-size:11px;font-weight:900;color:#fff">编辑</div>
<div class="abs" style="left:1708px;top:477px;width:116px;height:57px;background:#fff"></div>
<div class="abs" style="left:1708px;top:476px;width:116px;height:1px;background:#e7eaec"></div>
<div class="bdg b" style="left:1716px;top:497px;width:32px">在场</div>
<div class="abs" style="left:1759px;top:485px;width:57px;height:20px;background:#1c84c6;border-radius:3px"></div>
<div class="t" style="left:1765px;top:490px;font-size:11px;color:#fff">增重曲线</div>
<div class="edit" style="top:505px"></div>
<svg class="abs" style="left:1770px;top:510px" width="12" height="11" viewBox="0 0 12 11"><path d="M6.5 2H2.3C1.6 2 1 2.6 1 3.3v5.4C1 9.4 1.6 10 2.3 10h5.4C8.4 10 9 9.4 9 8.7V6.8" fill="none" stroke="#fff" stroke-width="1.3"/><path d="M4.3 7.6l.4-2L9.6.8l1.7 1.7-4.9 4.8z" fill="#fff"/></svg>
<div class="t" style="left:1782px;top:510px;font-size:11px;font-weight:900;color:#fff">编辑</div>
<div class="abs" style="left:1708px;top:535px;width:116px;height:35px;background:#f5f5f5"></div>
<div class="abs" style="left:1708px;top:534px;width:116px;height:1px;background:#e7eaec"></div>
<div class="bdg b" style="left:1716px;top:544px;width:32px">在场</div>
<div class="edit" style="top:542px"></div>
<svg class="abs" style="left:1770px;top:547px" width="12" height="11" viewBox="0 0 12 11"><path d="M6.5 2H2.3C1.6 2 1 2.6 1 3.3v5.4C1 9.4 1.6 10 2.3 10h5.4C8.4 10 9 9.4 9 8.7V6.8" fill="none" stroke="#fff" stroke-width="1.3"/><path d="M4.3 7.6l.4-2L9.6.8l1.7 1.7-4.9 4.8z" fill="#fff"/></svg>
<div class="t" style="left:1782px;top:547px;font-size:11px;font-weight:900;color:#fff">编辑</div>
<div class="abs" style="left:1708px;top:571px;width:116px;height:45px;background:#fff"></div>
<div class="abs" style="left:1708px;top:570px;width:116px;height:1px;background:#e7eaec"></div>
<div class="bdg b" style="left:1716px;top:585px;width:32px">在场</div>
<div class="edit" style="top:583px"></div>
<svg class="abs" style="left:1770px;top:588px" width="12" height="11" viewBox="0 0 12 11"><path d="M6.5 2H2.3C1.6 2 1 2.6 1 3.3v5.4C1 9.4 1.6 10 2.3 10h5.4C8.4 10 9 9.4 9 8.7V6.8" fill="none" stroke="#fff" stroke-width="1.3"/><path d="M4.3 7.6l.4-2L9.6.8l1.7 1.7-4.9 4.8z" fill="#fff"/></svg>
<div class="t" style="left:1782px;top:588px;font-size:11px;font-weight:900;color:#fff">编辑</div>
<div class="abs" style="left:1708px;top:617px;width:116px;height:36px;background:#fff"></div>
<div class="abs" style="left:1708px;top:616px;width:116px;height:1px;background:#e7eaec"></div>
<div class="bdg b" style="left:1716px;top:627px;width:32px">在场</div>
<div class="edit" style="top:625px"></div>
<svg class="abs" style="left:1770px;top:630px" width="12" height="11" viewBox="0 0 12 11"><path d="M6.5 2H2.3C1.6 2 1 2.6 1 3.3v5.4C1 9.4 1.6 10 2.3 10h5.4C8.4 10 9 9.4 9 8.7V6.8" fill="none" stroke="#fff" stroke-width="1.3"/><path d="M4.3 7.6l.4-2L9.6.8l1.7 1.7-4.9 4.8z" fill="#fff"/></svg>
<div class="t" style="left:1782px;top:630px;font-size:11px;font-weight:900;color:#fff">编辑</div>
<div class="abs" style="left:1708px;top:654px;width:116px;height:36px;background:#fff"></div>
<div class="abs" style="left:1708px;top:653px;width:116px;height:1px;background:#e7eaec"></div>
<div class="bdg b" style="left:1716px;top:663px;width:32px">在场</div>
<div class="edit" style="top:661px"></div>
<svg class="abs" style="left:1770px;top:666px" width="12" height="11" viewBox="0 0 12 11"><path d="M6.5 2H2.3C1.6 2 1 2.6 1 3.3v5.4C1 9.4 1.6 10 2.3 10h5.4C8.4 10 9 9.4 9 8.7V6.8" fill="none" stroke="#fff" stroke-width="1.3"/><path d="M4.3 7.6l.4-2L9.6.8l1.7 1.7-4.9 4.8z" fill="#fff"/></svg>
<div class="t" style="left:1782px;top:666px;font-size:11px;font-weight:900;color:#fff">编辑</div>
<div class="abs" style="left:1708px;top:691px;width:116px;height:36px;background:#fff"></div>
<div class="abs" style="left:1708px;top:690px;width:116px;height:1px;background:#e7eaec"></div>
<div class="bdg b" style="left:1716px;top:700px;width:32px">在场</div>
<div class="edit" style="top:698px"></div>
<svg class="abs" style="left:1770px;top:703px" width="12" height="11" viewBox="0 0 12 11"><path d="M6.5 2H2.3C1.6 2 1 2.6 1 3.3v5.4C1 9.4 1.6 10 2.3 10h5.4C8.4 10 9 9.4 9 8.7V6.8" fill="none" stroke="#fff" stroke-width="1.3"/><path d="M4.3 7.6l.4-2L9.6.8l1.7 1.7-4.9 4.8z" fill="#fff"/></svg>
<div class="t" style="left:1782px;top:703px;font-size:11px;font-weight:900;color:#fff">编辑</div>
<div class="abs" style="left:1708px;top:728px;width:116px;height:36px;background:#fff"></div>
<div class="abs" style="left:1708px;top:727px;width:116px;height:1px;background:#e7eaec"></div>
<div class="bdg b" style="left:1716px;top:737px;width:32px">在场</div>
<div class="edit" style="top:735px"></div>
<svg class="abs" style="left:1770px;top:740px" width="12" height="11" viewBox="0 0 12 11"><path d="M6.5 2H2.3C1.6 2 1 2.6 1 3.3v5.4C1 9.4 1.6 10 2.3 10h5.4C8.4 10 9 9.4 9 8.7V6.8" fill="none" stroke="#fff" stroke-width="1.3"/><path d="M4.3 7.6l.4-2L9.6.8l1.7 1.7-4.9 4.8z" fill="#fff"/></svg>
<div class="t" style="left:1782px;top:740px;font-size:11px;font-weight:900;color:#fff">编辑</div>
<div class="abs" style="left:203px;top:763px;width:1620px;height:1px;background:#e7eaec"></div>
<div class="abs" style="left:203px;top:764px;width:1620px;height:9px;background:#f1f1f1"></div>
<div class="abs" style="left:204px;top:764px;width:747px;height:9px;border-radius:5px;background:#c8c8c8"></div>
<div class="t" style="left:204px;top:791px;color:#676a6c">显示第</div>
<div class="t" style="left:244px;top:791px;color:#676a6c">1</div>
<div class="t" style="left:253px;top:791px;color:#676a6c">到第</div>
<div class="t" style="left:281px;top:791px;color:#676a6c">10</div>
<div class="t" style="left:298px;top:791px;color:#676a6c">条记录</div>
<div class="t" style="left:336px;top:791px;color:#676a6c">,</div>
<div class="t" style="left:347px;top:791px;color:#676a6c">总共</div>
<div class="t" style="left:374px;top:791px;color:#676a6c">28</div>
<div class="t" style="left:391px;top:791px;color:#676a6c">条记录</div>
<div class="t" style="left:436px;top:791px;color:#676a6c">每页显示</div>
<div class="abs" style="left:488px;top:783px;width:48px;height:30px;border:1px solid #ddd;border-radius:3px;background:#fff"></div>
<div class="t" style="left:501px;top:791px;color:#333">10</div>
<svg class="abs" style="left:519px;top:796px" width="6" height="4" viewBox="0 0 6 4"><path d="M0 3.5h6L3 0z" fill="#333"/></svg>
<div class="t" style="left:541px;top:791px;color:#676a6c">条记录</div>
<div class="abs" style="left:1695px;top:783px;width:129px;height:30px;border:1px solid #ddd;border-radius:4px;background:#fff"></div>
<div class="abs" style="left:1720px;top:784px;width:26px;height:29px;background:#f4f4f4"></div>
<div class="abs" style="left:1719px;top:783px;width:1px;height:30px;background:#ddd"></div>
<div class="abs" style="left:1746px;top:783px;width:1px;height:30px;background:#ddd"></div>
<div class="abs" style="left:1772px;top:783px;width:1px;height:30px;background:#ddd"></div>
<div class="abs" style="left:1799px;top:783px;width:1px;height:30px;background:#ddd"></div>
<div class="t" style="left:1706px;top:790px;color:#666">‹</div>
<div class="t" style="left:1730px;top:790px;color:#555">1</div>
<div class="t" style="left:1756px;top:790px;color:#555">2</div>
<div class="t" style="left:1783px;top:790px;color:#555">3</div>
<div class="t" style="left:1809px;top:790px;color:#666">›</div>
</body></html>
